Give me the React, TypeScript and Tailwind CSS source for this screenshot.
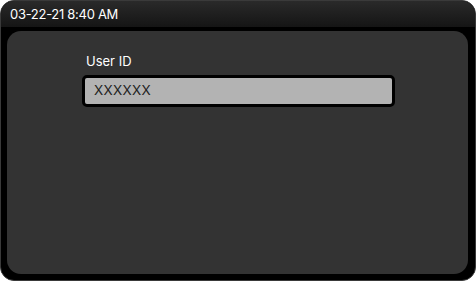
import React from "react";

export default function App() {
  return (
    <div className="w-[476px] h-[282px] bg-white" style={{ fontFamily: "Inter, 'Liberation Sans', sans-serif" }}>
      <div className="w-[476px] h-[281px] rounded-[14px] bg-black border border-[#3a3a3a] overflow-hidden flex flex-col">
        <div className="h-[26px] shrink-0 bg-gradient-to-b from-[#2a2a2a] to-[#151515] flex items-center pl-[9px] pt-[1px] text-white text-[13px] leading-none tracking-[-0.3px]">
          03-22-21 8:40 AM
        </div>
        <div className="flex-1 pt-[4px] pl-[6px] pr-[7px] pb-[6px] flex">
          <div className="flex-1 rounded-[14px] bg-[#333333] pt-[24px] pl-[75px]">
            <div className="text-white text-[13px] leading-none pl-[4px]">User ID</div>
            <div className="mt-[7px] w-[313px] h-[32px] rounded-[5px] border-[3px] border-black bg-[#b3b3b3] flex items-center pl-[9px] text-[#222] text-[13.5px] leading-none tracking-[0.3px]">
              XXXXXX
            </div>
          </div>
        </div>
      </div>
    </div>
  );
}
